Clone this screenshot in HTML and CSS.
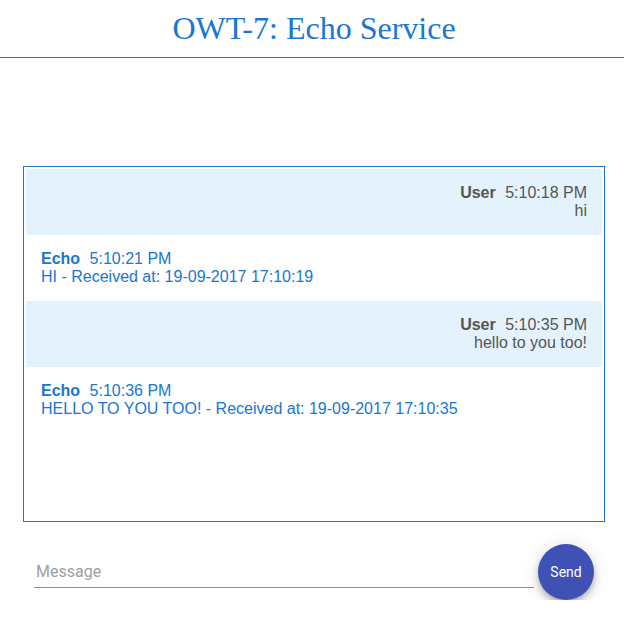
FILE: index.html
```html
<!DOCTYPE html>
<html>
<head>
<meta charset="utf-8">
<link rel="stylesheet" href="styles.css">
</head>
<body>
<header class="header"><h1 class="title">OWT-7: Echo Service</h1></header>
<main class="main">
  <section class="chat">
    <div class="msg msg-user">
      <div class="meta"><span class="name">User</span> 5:10:18 PM</div>
      <div class="text">hi</div>
    </div>
    <div class="msg msg-echo">
      <div class="meta"><span class="name">Echo</span> 5:10:21 PM</div>
      <div class="text">HI - Received at: 19-09-2017 17:10:19</div>
    </div>
    <div class="msg msg-user">
      <div class="meta"><span class="name">User</span> 5:10:35 PM</div>
      <div class="text">hello to you too!</div>
    </div>
    <div class="msg msg-echo">
      <div class="meta"><span class="name">Echo</span> 5:10:36 PM</div>
      <div class="text">HELLO TO YOU TOO! - Received at: 19-09-2017 17:10:35</div>
    </div>
  </section>
  <form class="composer">
    <div class="field"><input class="input" type="text" placeholder="Message"></div>
    <button class="send" type="button">Send</button>
  </form>
</main>
</body>
</html>
```
FILE: styles.css
```css
* { box-sizing: border-box; }
html, body { margin: 0; padding: 0; background: #fff; }
body { font-family: "Liberation Sans", Arial, sans-serif; font-size: 16px; }

.header {
  border-bottom: 1px solid #1976d2;
  padding: 10px 0 10px;
}
.title {
  margin: 0;
  text-align: center;
  font-family: "Liberation Serif", "Times New Roman", serif;
  font-weight: normal;
  font-size: 32px;
  line-height: 37px;
  color: #1976d2;
  padding-left: 4px;
}

.main {
  padding: 108px 19px 0 23px;
}

.chat {
  border: 1px solid #1976d2;
  padding: 2px;
  height: 356px;
  overflow: hidden;
}

.msg {
  padding: 15px 15px 15px;
  line-height: 18.4px;
  height: 66px;
}
.msg-user {
  background: #e3f2fd;
  color: #555;
  text-align: right;
}
.msg-echo {
  background: #fff;
  color: #1976d2;
}
.name {
  font-weight: bold;
  margin-right: 5px;
}

.composer {
  display: flex;
  align-items: center;
  margin: 22px 11px 0 11px;
}
.field {
  width: 500px;
  padding-top: 6px;
}
.input {
  display: block;
  width: 100%;
  border: none;
  border-bottom: 1px solid #8f8f8f;
  outline: none;
  padding: 0 0 6px 2px;
  font-family: Roboto, "Liberation Sans", sans-serif;
  font-size: 16px;
  line-height: 18px;
  color: #333;
  background: transparent;
}
.input::placeholder { color: #9e9e9e; }

.send {
  margin-left: 4px;
  width: 56px;
  height: 56px;
  border-radius: 50%;
  border: none;
  background: #3f51b5;
  color: #fff;
  font-family: Roboto, "Liberation Sans", sans-serif;
  font-size: 14px;
  padding: 0;
  box-shadow: 0 3px 5px -1px rgba(0,0,0,.2), 0 6px 10px 0 rgba(0,0,0,.14), 0 1px 18px 0 rgba(0,0,0,.12);
}
```
